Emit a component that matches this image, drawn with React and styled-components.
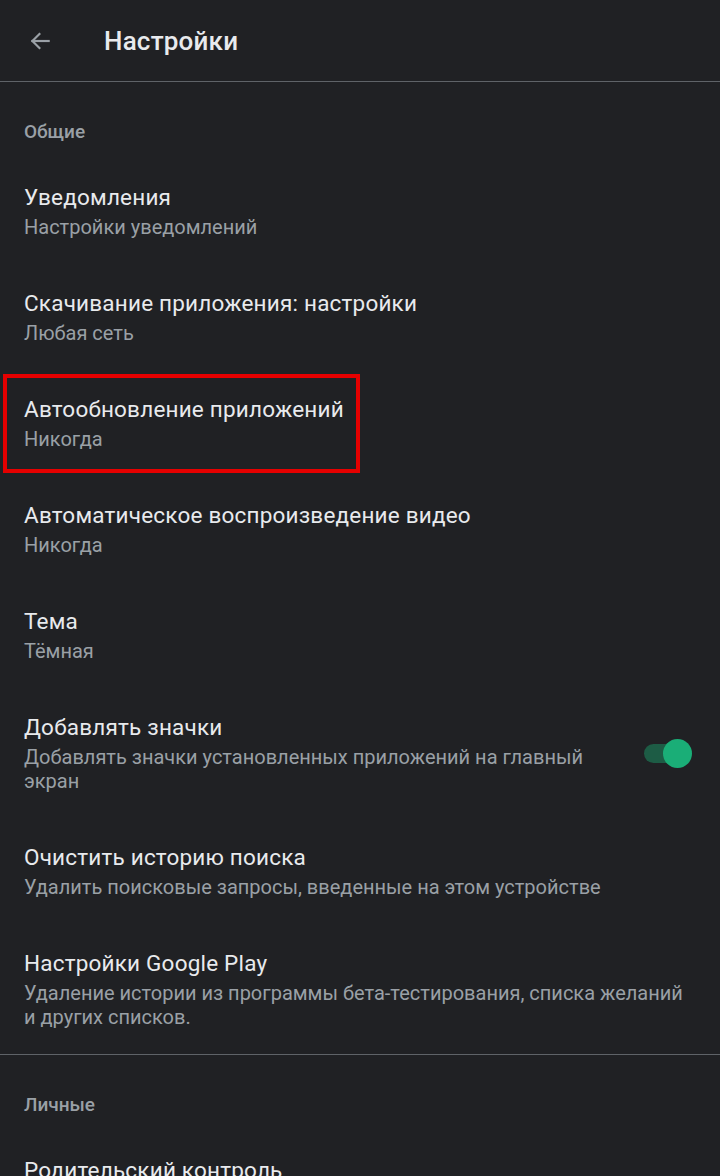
import React from "react";
import styled, { createGlobalStyle } from "styled-components";

const Global = createGlobalStyle`
  html, body { margin: 0; padding: 0; background: #202124; }
  body { font-family: Roboto, "Noto Sans", sans-serif; -webkit-font-smoothing: antialiased; }
  * { box-sizing: border-box; }
`;

const Page = styled.div`
  width: 720px;
  height: 1176px;
  overflow: hidden;
  background: #202124;
  color: #e8eaed;
`;

const TopBar = styled.header`
  height: 82px;
  display: flex;
  align-items: center;
  border-bottom: 1px solid #5f6368;
  padding-left: 26px;
`;

const BackButton = styled.button`
  width: 28px;
  height: 28px;
  padding: 0;
  border: 0;
  background: none;
  display: flex;
  align-items: center;
  justify-content: center;
  color: #9aa0a6;
  margin-right: 50px;
`;

const Title = styled.h1`
  margin: 0;
  font-size: 26px;
  font-weight: 500;
  color: #e8eaed;
  letter-spacing: 0.2px;
`;

const Section = styled.section`
  border-bottom: ${(p) => (p.$divider ? "1px solid #5f6368" : "none")};
`;

const SectionHeader = styled.div`
  padding: 38px 24px 14px;
  font-size: 19px;
  line-height: 24px;
  font-weight: 500;
  color: #9aa0a6;
`;

const Item = styled.div`
  position: relative;
  display: flex;
  align-items: center;
  padding: 25px 24px;
  gap: 24px;
`;

const ItemText = styled.div`
  flex: 1;
  min-width: 0;
  max-width: ${(p) => p.$max || "none"};
`;

const ItemTitle = styled.div`
  font-size: 22.5px;
  line-height: 28px;
  letter-spacing: 0.2px;
  color: #e8eaed;
`;

const ItemSub = styled.div`
  margin-top: 4px;
  font-size: 20px;
  line-height: 24px;
  color: #9aa0a6;
`;

const Highlight = styled.div`
  position: absolute;
  left: 3px;
  top: 4px;
  width: 357px;
  height: 99px;
  border: 4px solid #e50000;
  pointer-events: none;
`;

const Toggle = styled.div`
  position: relative;
  width: 48px;
  height: 29px;
  flex: none;
  margin-right: 4px;
`;

const Track = styled.div`
  position: absolute;
  left: 0;
  top: 5px;
  width: 38px;
  height: 19px;
  border-radius: 10px;
  background: #1d5c45;
`;

const Thumb = styled.div`
  position: absolute;
  right: 0;
  top: 0;
  width: 29px;
  height: 29px;
  border-radius: 50%;
  background: #1aae77;
`;

const ArrowIcon = () => (
  <svg width="26" height="26" viewBox="0 0 24 24" fill="none" stroke="currentColor" strokeWidth="2" strokeLinecap="square">
    <path d="M20 12H5" />
    <path d="M11.5 5.5L5 12l6.5 6.5" />
  </svg>
);

const general = [
  { t: "Уведомления", s: "Настройки уведомлений" },
  { t: "Скачивание приложения: настройки", s: "Любая сеть" },
  { t: "Автообновление приложений", s: "Никогда", hl: true },
  { t: "Автоматическое воспроизведение видео", s: "Никогда" },
  { t: "Тема", s: "Тёмная" },
  { t: "Добавлять значки", s: "Добавлять значки установленных приложений на главный экран", toggle: true },
  { t: "Очистить историю поиска", s: "Удалить поисковые запросы, введенные на этом устройстве" },
  { t: "Настройки Google Play", s: "Удаление истории из программы бета-тестирования, списка желаний и других списков." },
];

export default function App() {
  return (
    <Page>
      <Global />
      <TopBar>
        <BackButton aria-label="Назад"><ArrowIcon /></BackButton>
        <Title>Настройки</Title>
      </TopBar>
      <Section $divider>
        <SectionHeader>Общие</SectionHeader>
        {general.map((it) => (
          <Item key={it.t}>
            <ItemText $max={it.max}>
              <ItemTitle>{it.t}</ItemTitle>
              <ItemSub>{it.s}</ItemSub>
            </ItemText>
            {it.toggle && (
              <Toggle>
                <Track />
                <Thumb />
              </Toggle>
            )}
            {it.hl && <Highlight />}
          </Item>
        ))}
      </Section>
      <Section>
        <SectionHeader>Личные</SectionHeader>
        <Item>
          <ItemText>
            <ItemTitle>Родительский контроль</ItemTitle>
          </ItemText>
        </Item>
      </Section>
    </Page>
  );
}
